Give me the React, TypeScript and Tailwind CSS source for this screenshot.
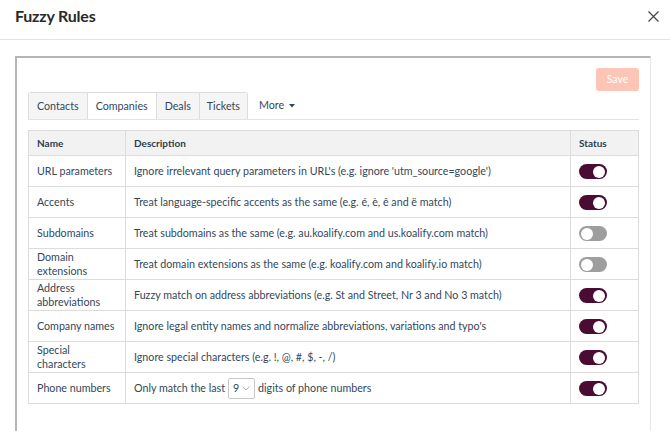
import { useState } from "react";

type Rule = {
    name: string;
    desc: React.ReactNode;
    on: boolean;
};

function Toggle({ on, onClick }: { on: boolean; onClick: () => void }) {
    return (
        <button
            onClick={onClick}
            className={`relative w-[28px] h-[15px] rounded-full ${on ? "bg-[#4b0c33]" : "bg-[#9e9e9e]"}`}
        >
            <span
                className={`absolute top-[1.5px] w-[12px] h-[12px] rounded-full bg-white ${on ? "right-[2px]" : "left-[2px]"}`}
            />
        </button>
    );
}

export default function App() {
    const [rules, setRules] = useState<Rule[]>([
        { name: "URL parameters", desc: "Ignore irrelevant query parameters in URL's (e.g. ignore 'utm_source=google')", on: true },
        { name: "Accents", desc: "Treat language-specific accents as the same (e.g. é, è, ê and ë match)", on: true },
        { name: "Subdomains", desc: "Treat subdomains as the same (e.g. au.koalify.com and us.koalify.com match)", on: false },
        { name: "Domain extensions", desc: "Treat domain extensions as the same (e.g. koalify.com and koalify.io match)", on: false },
        { name: "Address abbreviations", desc: "Fuzzy match on address abbreviations (e.g. St and Street, Nr 3 and No 3 match)", on: true },
        { name: "Company names", desc: "Ignore legal entity names and normalize abbreviations, variations and typo's", on: true },
        { name: "Special characters", desc: "Ignore special characters (e.g. !, @, #, $, -, /)", on: true },
        { name: "Phone numbers", desc: "phone", on: true },
    ]);

    const toggle = (i: number) =>
        setRules((r) => r.map((x, j) => (j === i ? { ...x, on: !x.on } : x)));

    return (
        <div className="w-[670px] h-[431px] bg-white overflow-hidden text-[#33475b] font-['Lato',sans-serif]">
            <div className="h-[40px] flex items-start justify-between pt-[4px] pl-[15px] pr-[8px] border-b border-[#dfe3eb]">
                <h1 className="text-[16px] font-bold text-[#2a2a2a] tracking-[-0.2px]">Fuzzy Rules</h1>
                <button className="w-[18px] h-[18px] mt-[3px] flex items-center justify-center text-[#444]">
                    <svg width="11" height="11" viewBox="0 0 11 11" stroke="currentColor" strokeWidth="1.2">
                        <path d="M0.5 0.5 L10.5 10.5 M10.5 0.5 L0.5 10.5" />
                    </svg>
                </button>
            </div>

            <div className="ml-[15px] mr-[19px] mt-[16px] h-[400px] border-t-2 border-l-2 border-r border-t-[#b5b5b5] border-l-[#b5b5b5] border-r-[#e6e6e6] pl-[11px] pr-[11px] pt-[10px]">
                <div className="flex justify-end">
                    <button className="w-[43px] h-[23px] rounded-[3px] bg-[#fcc5b6] text-white text-[10.5px]">Save</button>
                </div>

                <div className="flex items-end border-b border-[#dfe3eb] mt-[1px] text-[10.7px] text-[#33475b]">
                    <div className="flex border border-b-0 border-[#dcdcdc] rounded-t-[3px] h-[27px]">
                        <div className="px-[8px] flex items-center bg-[#f5f5f5] border-r border-[#dcdcdc]">Contacts</div>
                        <div className="px-[8px] flex items-center bg-white border-r border-[#dcdcdc]">Companies</div>
                        <div className="px-[8px] flex items-center bg-[#f5f5f5] border-r border-[#dcdcdc]">Deals</div>
                        <div className="px-[7px] flex items-center bg-[#f5f5f5]">Tickets</div>
                    </div>
                    <div className="h-[27px] flex items-center ml-[11px] gap-[5px]">
                        <span>More</span>
                        <svg width="6" height="4" viewBox="0 0 6 4" fill="currentColor"><path d="M0 0 H6 L3 3.5 Z" /></svg>
                    </div>
                </div>

                <table className="mt-[10px] w-[611px] border-collapse text-[10.7px] text-[#33475b]">
                    <thead>
                        <tr className="h-[25px] bg-[#f2f2f2]">
                            <th className="w-[97px] border border-[#dcdcdc] text-left font-bold text-[10px] text-[#2d3e50] pl-[8px]">Name</th>
                            <th className="border border-[#dcdcdc] text-left font-bold text-[10px] text-[#2d3e50] pl-[8px]">Description</th>
                            <th className="w-[68px] border border-[#dcdcdc] text-left font-bold text-[10px] text-[#2d3e50] pl-[8px]">Status</th>
                        </tr>
                    </thead>
                    <tbody>
                        {rules.map((r, i) => (
                            <tr key={r.name} className="h-[31px]">
                                <td className="border border-[#dcdcdc] pl-[8px] pr-[4px] leading-[14px]">{r.name}</td>
                                <td className="border border-[#dcdcdc] pl-[8px]">
                                    {r.desc === "phone" ? (
                                        <span className="flex items-center gap-[3px]">
                                            Only match the last
                                            <span className="inline-flex items-center justify-between w-[27px] h-[21px] border border-[#c8c8c8] rounded-[2px] px-[4px] bg-white">
                                                9
                                                <svg width="8" height="5" viewBox="0 0 8 5" fill="none" stroke="#b0b0b0" strokeWidth="1"><path d="M0.5 0.5 L4 4 L7.5 0.5" /></svg>
                                            </span>
                                            digits of phone numbers
                                        </span>
                                    ) : (
                                        r.desc
                                    )}
                                </td>
                                <td className="border border-[#dcdcdc] pl-[8px]">
                                    <div className="flex items-center pt-[1px]">
                                        <Toggle on={r.on} onClick={() => toggle(i)} />
                                    </div>
                                </td>
                            </tr>
                        ))}
                    </tbody>
                </table>
            </div>
        </div>
    );
}
